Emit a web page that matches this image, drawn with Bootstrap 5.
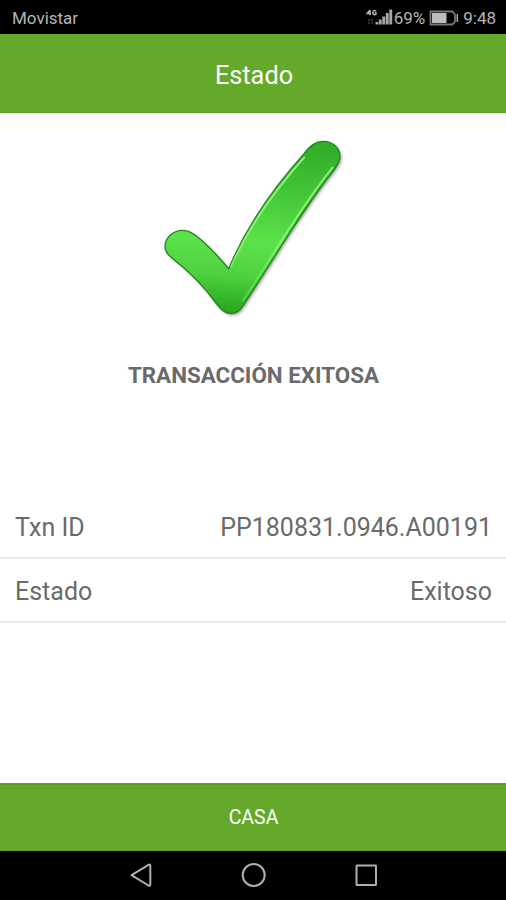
<!DOCTYPE html>
<html lang="es">
<head>
<meta charset="utf-8">
<meta name="viewport" content="width=device-width, initial-scale=1">
<title>Estado</title>
<link href="https://cdn.jsdelivr.net/npm/bootstrap@5.3.0/dist/css/bootstrap.min.css" rel="stylesheet">
<style>
body{font-family:Roboto,"Liberation Sans",sans-serif;color:#6a6a6a;background:#fff}
.screen{height:900px;overflow:hidden}
.statusbar{height:34px;padding:2px 10px 0 12px;color:#b4b4b4;font-size:17px;line-height:32px}
.statusbar svg{display:block}
.brand-bar{background:#65a92b;color:#fff}
.title-bar{height:79px;padding:5px 0 0 2px;font-size:25.3px;border-bottom:1px solid #5a9f20}
.check-area{height:217px;padding-top:17px}
.result{height:90px;padding-left:1px;font-size:22.4px;line-height:90px;font-weight:700}
.details{margin-top:75px;font-size:25px}
.details .detail-row{height:64px;padding:4px 14px 0 15px;border-bottom:2px solid #e9e9e9}
.home-btn{height:68px;font-size:19.5px;border-top:2px solid #599c1f;padding:0 0 0 1px}
.home-btn:hover{background:#5b9c25;color:#fff}
.navkeys{height:49px}
</style>
</head>
<body>
<div class="screen d-flex flex-column">
  <div class="statusbar bg-black d-flex justify-content-between flex-shrink-0">
    <span>Movistar</span>
    <div class="d-flex align-items-center">
      <svg width="28" height="20" viewBox="0 0 28 20" fill="#a6a6a6">
        <path d="M4 2 1.2 5.500H5M4 2V7.300M10 3.200C8.500 1.800 6.800 3 6.800 4.800S8.500 7.500 10 6.200V4.900H8.600" fill="none" stroke="#b4b4b4" stroke-width="1.500"/>
        <path d="M2 11h2v2H2zM5 11h2v2H5zM2 14h2v2H2zM5 14h2v2H5z" fill="#303030"/>
        <path d="M9.500 14h2.700v2.500H9.500zM12.800 11.500h2.900v5h-2.900zM16.300 8.500h2.900v8h-2.900zM19.800 5h2.900v11.500h-2.900zM23.300 1.500h2.900v15h-2.900z"/>
      </svg>
      <span>69%</span>
      <svg class="ms-1" width="30" height="18" viewBox="0 0 30 18">
        <path d="M1.500 2.500H23.500L26 5.500V12.500L23.500 15.500H1.500Z" fill="none" stroke="#777" stroke-width="1.800"/>
        <path d="M3 4H17.500V14H3z" fill="#bcbcbc"/>
        <path d="M28.300 5V13" stroke="#aaa" stroke-width="1.500"/>
      </svg>
      <span class="ms-1">9:48</span>
    </div>
  </div>
  <header class="title-bar brand-bar d-flex align-items-center justify-content-center flex-shrink-0">Estado</header>
  <main class="flex-grow-1">
    <div class="check-area d-flex justify-content-center">
      <svg width="210" height="200" viewBox="-6 0 630 600" role="img" aria-label="Transacción exitosa">
        <defs>
          <linearGradient id="fill" gradientUnits="userSpaceOnUse" x1="330" y1="40" x2="290" y2="550">
            <stop offset="0" stop-color="#30ae28"/><stop offset=".3" stop-color="#46c83a"/>
            <stop offset=".58" stop-color="#5ce34b"/><stop offset=".78" stop-color="#4fd23f"/><stop offset="1" stop-color="#28a61f"/>
          </linearGradient>
          <linearGradient id="shine" gradientUnits="userSpaceOnUse" x1="0" y1="80" x2="0" y2="530">
            <stop offset="0" stop-color="#9df486"/><stop offset=".6" stop-color="#8df276"/><stop offset="1" stop-color="#4fd33f"/>
          </linearGradient>
          <filter id="shade" x="-10%" y="-10%" width="120%" height="120%"><feGaussianBlur stdDeviation="4"/></filter>
          <path id="tick" d="M98 301C122 301 145 321 171 346Q206 380 236 416Q310 240 462 71C480 48 496 34 520 34C550 34 570 55 570 81C570 96 561 106 549 124C462 232 382 370 284 520C270 542 260 551 243 551C225 551 213 539 200 522C158 463 116 423 66 384C51 372 45 364 45 350C45 322 70 301 98 301Z"/>
        </defs>
        <use href="#tick" fill="#555" opacity=".55" transform="translate(5 5)" filter="url(#shade)"/>
        <use href="#tick" fill="url(#fill)" stroke="#238522" stroke-width="4"/>
        <path d="M243 410Q316 246 463 82" fill="none" stroke="url(#shine)" stroke-width="5" stroke-linecap="round"/>
        <path d="M548 112C454 230 375 365 279 512" fill="none" stroke="url(#shine)" stroke-width="5" stroke-linecap="round"/>
      </svg>
    </div>
    <div class="result text-center">TRANSACCIÓN EXITOSA</div>
    <div class="details">
      <div class="detail-row d-flex justify-content-between align-items-center"><span>Txn ID</span><span>PP180831.0946.A00191</span></div>
      <div class="detail-row d-flex justify-content-between align-items-center"><span>Estado</span><span>Exitoso</span></div>
    </div>
  </main>
  <button type="button" class="home-btn brand-bar btn rounded-0 border-start-0 border-end-0 border-bottom-0 w-100 flex-shrink-0">CASA</button>
  <nav class="navkeys bg-black flex-shrink-0" aria-label="Sistema">
    <svg class="d-block" width="506" height="49" viewBox="0 1 506 49" fill="none" stroke="#b0b0b0" stroke-width="2" stroke-linejoin="round">
      <path d="M131.500 25.200 148.500 14.800Q150.300 14 150.300 16V34.500Q150.300 36.300 148.500 35.500Z"/>
      <circle cx="253.700" cy="25" r="11"/>
      <rect x="356.500" y="15.500" width="19.500" height="19.500" rx=".5"/>
    </svg>
  </nav>
</div>
<script src="https://cdn.jsdelivr.net/npm/bootstrap@5.3.0/dist/js/bootstrap.bundle.min.js"></script>
</body>
</html>
